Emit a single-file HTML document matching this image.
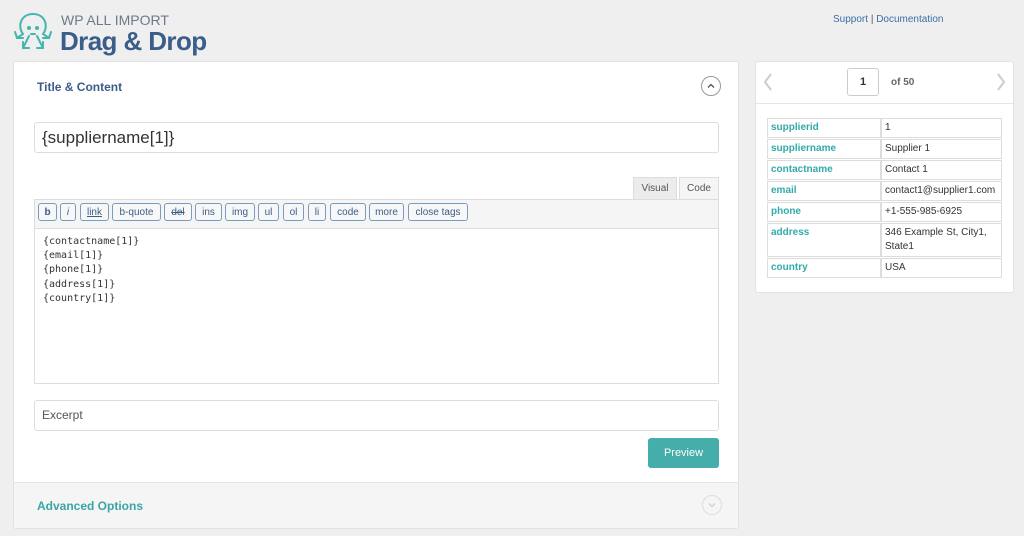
<!DOCTYPE html><html><head><style>
body{margin:0;width:1024px;height:536px;background:#efefef;font-family:"Liberation Sans",sans-serif;position:relative;overflow:hidden}
.a{position:absolute}
.panel{background:#fff;border:1px solid #e2e2e2;border-radius:3px}
.inp{background:#fff;border:1px solid #ddd;border-radius:3px;box-sizing:border-box}
.btn{position:absolute;top:203px;height:18px;border:1px solid #7a9cc0;border-radius:3px;background:#f7f7f7;color:#3a5d8a;font-size:10px;line-height:17px;text-align:center;box-sizing:border-box}
.mono{font-family:"DejaVu Sans Mono",monospace;font-size:10px;line-height:14.2px;color:#333}
table{border-collapse:separate;border-spacing:0 1px;font-size:10px}
td{border:1px solid #ddd;padding:2px 3px;vertical-align:top;color:#333;line-height:14px}
td.k{color:#3aa;font-weight:bold;width:106px}
</style></head><body>
<svg class="a" style="left:11px;top:10px" width="44" height="44" viewBox="0 0 44 44" fill="none" stroke="#45b5b0" stroke-width="2" stroke-linecap="round">
<path d="M12 24 C6 16 10 4 22 4 C34 4 38 16 32 24"/><path d="M12 24 L6 28 M4 22 L6 28 L12 28"/><path d="M32 24 L38 28 M40 22 L38 28 L32 28"/><path d="M18 26 L12 38 M12 32 L12 38 L18 38"/><path d="M26 26 L32 38 M32 32 L32 38 L26 38"/><circle cx="18" cy="18" r="1" fill="#45b5b0"/><circle cx="26" cy="18" r="1" fill="#45b5b0"/><path d="M20 24 L24 24"/></svg>
<div class="a" style="left:61px;top:12px;font-size:14px;color:#6b7a8a">WP ALL IMPORT</div>
<div class="a" style="left:60px;top:26px;font-size:26px;font-weight:bold;color:#3a5d8a;letter-spacing:-0.6px">Drag &amp; Drop</div>
<div class="a" style="left:833px;top:14px;font-size:10px;color:#3a6fa5">Support <span style="color:#555">|</span> Documentation</div>

<div class="a panel" style="left:13px;top:61px;width:724px;height:466px;overflow:hidden">
<div class="a" style="left:23px;top:18px;font-size:12px;font-weight:bold;color:#3a5d8a">Title &amp; Content</div>
<svg class="a" style="left:687px;top:14px" width="20" height="20" viewBox="0 0 20 20" fill="none" stroke="#555"><circle cx="10" cy="10" r="9.5" stroke="#999"/><path d="M7 11.5 L10 8.5 L13 11.5" stroke-width="1.3"/></svg>
<div class="a inp" style="left:20px;top:60px;width:685px;height:31px;font-size:17px;line-height:29px;padding-left:7px;color:#333">{suppliername[1]}</div>
<div class="a" style="left:619px;top:115px;width:44px;height:23px;background:#ececec;border:1px solid #ddd;font-size:10px;line-height:22px;text-align:center;color:#555;box-sizing:border-box">Visual</div>
<div class="a" style="left:665px;top:115px;width:40px;height:23px;background:#f5f5f5;border:1px solid #ddd;border-bottom:none;font-size:10px;line-height:22px;text-align:center;color:#555;box-sizing:border-box">Code</div>
<div class="a" style="left:20px;top:137px;width:685px;height:185px;border:1px solid #ddd;box-sizing:border-box"></div>
<div class="a" style="left:21px;top:138px;width:683px;height:28px;background:#f5f5f5;border-bottom:1px solid #ddd"></div>
<div class="a mono" style="left:29px;top:173px">{contactname[1]}<br>{email[1]}<br>{phone[1]}<br>{address[1]}<br>{country[1]}</div>
<div class="a inp" style="left:20px;top:338px;width:685px;height:31px;font-size:12px;line-height:29px;padding-left:7px;color:#555">Excerpt</div>
<div class="a" style="left:634px;top:376px;width:71px;height:30px;background:#45adaa;border-radius:3px;color:#fff;font-size:11px;line-height:30px;text-align:center">Preview</div>
<div class="a" style="left:0;top:420px;width:724px;height:46px;background:#f5f5f5;border-top:1px solid #e5e5e5"></div>
<div class="a" style="left:23px;top:437px;font-size:12px;font-weight:bold;color:#3aa5a5">Advanced Options</div>
<svg class="a" style="left:688px;top:433px" width="20" height="20" viewBox="0 0 20 20" fill="none" stroke="#ccc"><circle cx="10" cy="10" r="9.5" stroke="#ddd"/><path d="M7 8.5 L10 11.5 L13 8.5" stroke-width="1.2"/></svg>
</div>
<div class="btn" style="left:38px;width:19px;font-weight:bold">b</div>
<div class="btn" style="left:60px;width:16px;font-style:italic">i</div>
<div class="btn" style="left:80px;width:29px;text-decoration:underline">link</div>
<div class="btn" style="left:112px;width:49px">b-quote</div>
<div class="btn" style="left:164px;width:28px;text-decoration:line-through">del</div>
<div class="btn" style="left:195px;width:27px">ins</div>
<div class="btn" style="left:225px;width:30px">img</div>
<div class="btn" style="left:258px;width:21px">ul</div>
<div class="btn" style="left:283px;width:21px">ol</div>
<div class="btn" style="left:308px;width:18px">li</div>
<div class="btn" style="left:330px;width:36px">code</div>
<div class="btn" style="left:369px;width:35px">more</div>
<div class="btn" style="left:408px;width:60px">close tags</div>

<div class="a panel" style="left:755px;top:61px;width:257px;height:230px">
<div class="a" style="left:0;top:41px;width:257px;height:1px;background:#e5e5e5"></div>
<svg class="a" style="left:7px;top:11px" width="10" height="18" viewBox="0 0 10 18" fill="none" stroke="#ccc" stroke-width="2"><path d="M8 1 L2 9 L8 17"/></svg>
<svg class="a" style="left:240px;top:11px" width="10" height="18" viewBox="0 0 10 18" fill="none" stroke="#ccc" stroke-width="2"><path d="M2 1 L8 9 L2 17"/></svg>
<div class="a" style="left:91px;top:6px;width:32px;height:28px;border:1px solid #ccc;border-radius:3px;box-sizing:border-box;text-align:center;line-height:26px;font-size:11px;font-weight:bold;color:#333">1</div>
<div class="a" style="left:135px;top:15px;font-size:10px;color:#666;font-weight:bold">of 50</div>
<table class="a" style="left:11px;top:55px;width:235px">
<tr><td class="k">supplierid</td><td>1</td></tr>
<tr><td class="k">suppliername</td><td>Supplier 1</td></tr>
<tr><td class="k">contactname</td><td>Contact 1</td></tr>
<tr><td class="k">email</td><td>contact1@supplier1.com</td></tr>
<tr><td class="k">phone</td><td>+1-555-985-6925</td></tr>
<tr><td class="k">address</td><td>346 Example St, City1,<br>State1</td></tr>
<tr><td class="k">country</td><td>USA</td></tr>
</table>
</div>
</body></html>
